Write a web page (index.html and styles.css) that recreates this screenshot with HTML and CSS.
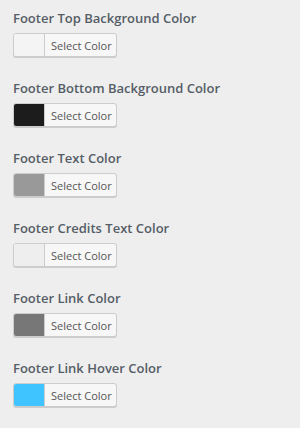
FILE: index.html
```html
<!DOCTYPE html>
<html>
<head>
<meta charset="utf-8">
<link rel="stylesheet" href="styles.css">
</head>
<body>
<ul class="controls">
  <li class="control">
    <span class="title">Footer Top Background Color</span>
    <button class="picker"><span class="swatch" style="background:#f4f4f4"></span><span class="label">Select Color</span></button>
  </li>
  <li class="control">
    <span class="title">Footer Bottom Background Color</span>
    <button class="picker"><span class="swatch" style="background:#1c1c1c"></span><span class="label">Select Color</span></button>
  </li>
  <li class="control">
    <span class="title">Footer Text Color</span>
    <button class="picker"><span class="swatch" style="background:#999999"></span><span class="label">Select Color</span></button>
  </li>
  <li class="control">
    <span class="title">Footer Credits Text Color</span>
    <button class="picker"><span class="swatch" style="background:#eeeeee"></span><span class="label">Select Color</span></button>
  </li>
  <li class="control">
    <span class="title">Footer Link Color</span>
    <button class="picker"><span class="swatch" style="background:#777777"></span><span class="label">Select Color</span></button>
  </li>
  <li class="control">
    <span class="title">Footer Link Hover Color</span>
    <button class="picker"><span class="swatch" style="background:#40c4ff"></span><span class="label">Select Color</span></button>
  </li>
</ul>
</body>
</html>
```
FILE: styles.css
```css
html, body {
  margin: 0;
  padding: 0;
  background: #eeeeee;
}
body {
  width: 300px;
  height: 428px;
  overflow: hidden;
  font-family: "Open Sans", "Noto Sans", sans-serif;
}
.controls {
  list-style: none;
  margin: 0;
  padding: 8px 13px 0;
  display: flex;
  flex-direction: column;
  gap: 21px;
}
.control {
  display: flex;
  flex-direction: column;
  align-items: flex-start;
  gap: 5px;
}
.title {
  font-size: 13px;
  font-weight: 600;
  line-height: 20px;
  color: #555d66;
}
.picker {
  box-sizing: border-box;
  display: flex;
  align-items: stretch;
  height: 24px;
  padding: 0;
  margin: 0;
  border: 1px solid #cccccc;
  border-radius: 3px;
  background: #f7f7f7;
  box-shadow: 0 1px 0 #cccccc;
  overflow: hidden;
  font-family: inherit;
}
.swatch {
  width: 30px;
  border-right: 1px solid #cccccc;
}
.label {
  display: flex;
  align-items: center;
  padding: 0 4px 0 6px;
  font-size: 11px;
  color: #555555;
}
```
